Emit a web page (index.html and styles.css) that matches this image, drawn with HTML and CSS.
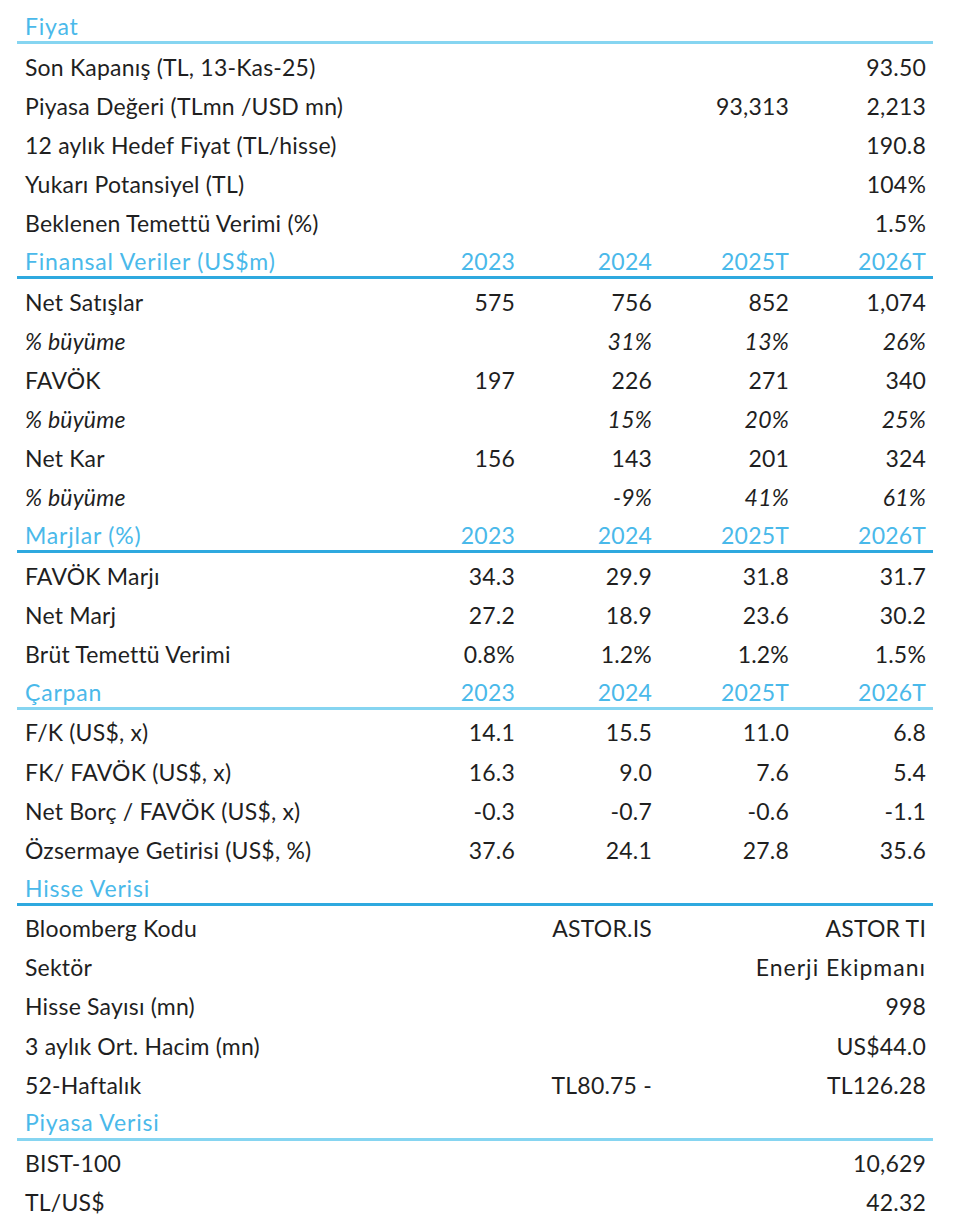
FILE: index.html
```html
<!DOCTYPE html>
<html lang="tr">
<head>
<meta charset="utf-8">
<title>ASTOR</title>
<link rel="stylesheet" href="styles.css">
</head>
<body>
<table class="sheet">
  <colgroup>
    <col class="c-label"><col class="c-num"><col class="c-num"><col class="c-num"><col class="c-num">
  </colgroup>
  <tbody>
    <tr class="head light"><td colspan="5">Fiyat</td></tr>
    <tr><td>Son Kapanış (TL, 13-Kas-25)</td><td></td><td></td><td></td><td>93.50</td></tr>
    <tr><td>Piyasa Değeri (TLmn /USD mn)</td><td></td><td></td><td>93,313</td><td>2,213</td></tr>
    <tr><td>12 aylık Hedef Fiyat (TL/hisse)</td><td></td><td></td><td></td><td>190.8</td></tr>
    <tr><td>Yukarı Potansiyel (TL)</td><td></td><td></td><td></td><td>104%</td></tr>
    <tr><td>Beklenen Temettü Verimi (%)</td><td></td><td></td><td></td><td>1.5%</td></tr>

    <tr class="head"><td>Finansal Veriler (US$m)</td><td>2023</td><td>2024</td><td>2025T</td><td>2026T</td></tr>
    <tr><td>Net Satışlar</td><td>575</td><td>756</td><td>852</td><td>1,074</td></tr>
    <tr class="it"><td>% büyüme</td><td></td><td>31%</td><td>13%</td><td>26%</td></tr>
    <tr><td>FAVÖK</td><td>197</td><td>226</td><td>271</td><td>340</td></tr>
    <tr class="it"><td>% büyüme</td><td></td><td>15%</td><td>20%</td><td>25%</td></tr>
    <tr><td>Net Kar</td><td>156</td><td>143</td><td>201</td><td>324</td></tr>
    <tr class="it"><td>% büyüme</td><td></td><td>-9%</td><td>41%</td><td>61%</td></tr>

    <tr class="head"><td>Marjlar (%)</td><td>2023</td><td>2024</td><td>2025T</td><td>2026T</td></tr>
    <tr><td>FAVÖK Marjı</td><td>34.3</td><td>29.9</td><td>31.8</td><td>31.7</td></tr>
    <tr><td>Net Marj</td><td>27.2</td><td>18.9</td><td>23.6</td><td>30.2</td></tr>
    <tr><td>Brüt Temettü Verimi</td><td>0.8%</td><td>1.2%</td><td>1.2%</td><td>1.5%</td></tr>

    <tr class="head light"><td>Çarpan</td><td>2023</td><td>2024</td><td>2025T</td><td>2026T</td></tr>
    <tr><td>F/K (US$, x)</td><td>14.1</td><td>15.5</td><td>11.0</td><td>6.8</td></tr>
    <tr><td>FK/ FAVÖK (US$, x)</td><td>16.3</td><td>9.0</td><td>7.6</td><td>5.4</td></tr>
    <tr><td>Net Borç / FAVÖK (US$, x)</td><td>-0.3</td><td>-0.7</td><td>-0.6</td><td>-1.1</td></tr>
    <tr><td>Özsermaye Getirisi (US$, %)</td><td>37.6</td><td>24.1</td><td>27.8</td><td>35.6</td></tr>

    <tr class="head"><td colspan="5">Hisse Verisi</td></tr>
    <tr><td>Bloomberg Kodu</td><td></td><td>ASTOR.IS</td><td></td><td>ASTOR TI</td></tr>
    <tr><td>Sektör</td><td colspan="4" class="wide">Enerji Ekipmanı</td></tr>
    <tr><td>Hisse Sayısı (mn)</td><td></td><td></td><td></td><td>998</td></tr>
    <tr><td>3 aylık Ort. Hacim (mn)</td><td></td><td></td><td></td><td>US$44.0</td></tr>
    <tr><td>52-Haftalık</td><td></td><td>TL80.75 -</td><td></td><td>TL126.28</td></tr>

    <tr class="head light"><td colspan="5">Piyasa Verisi</td></tr>
    <tr><td>BIST-100</td><td></td><td></td><td></td><td>10,629</td></tr>
    <tr><td>TL/US$</td><td></td><td></td><td></td><td>42.32</td></tr>
  </tbody>
</table>
</body>
</html>
```
FILE: styles.css
```css
html, body {
  margin: 0;
  padding: 0;
  background: #ffffff;
}
body {
  padding: 8px 0 0 17px;
  font-family: "Lato", "Open Sans", sans-serif;
  color: #1f1f1f;
}
.sheet {
  width: 916px;
  table-layout: fixed;
  border-collapse: collapse;
  font-size: 23px;
  letter-spacing: 0.2px;
}
.c-label { width: 368px; }
.c-num { width: 137px; }
.sheet td {
  height: 39.17px;
  padding: 0 7px 0 0;
  text-align: right;
  white-space: nowrap;
  vertical-align: middle;
  box-sizing: border-box;
}
.sheet td:first-child {
  text-align: left;
  padding-left: 8px;
}
.sheet td.wide {
  text-align: right;
  letter-spacing: 1px;
}
.sheet .head td {
  color: #4ab9ea;
  padding-bottom: 3px;
  background: linear-gradient(#2ea9df, #2ea9df) no-repeat left 0 bottom 3px / 100% 3px;
}
.sheet .head td:first-child {
  letter-spacing: 0.8px;
}
.sheet .head.light td {
  background-image: linear-gradient(#86d5f1, #86d5f1);
}
.sheet .head td[colspan] {
  text-align: left;
}
.sheet .it td {
  font-style: italic;
}
```
